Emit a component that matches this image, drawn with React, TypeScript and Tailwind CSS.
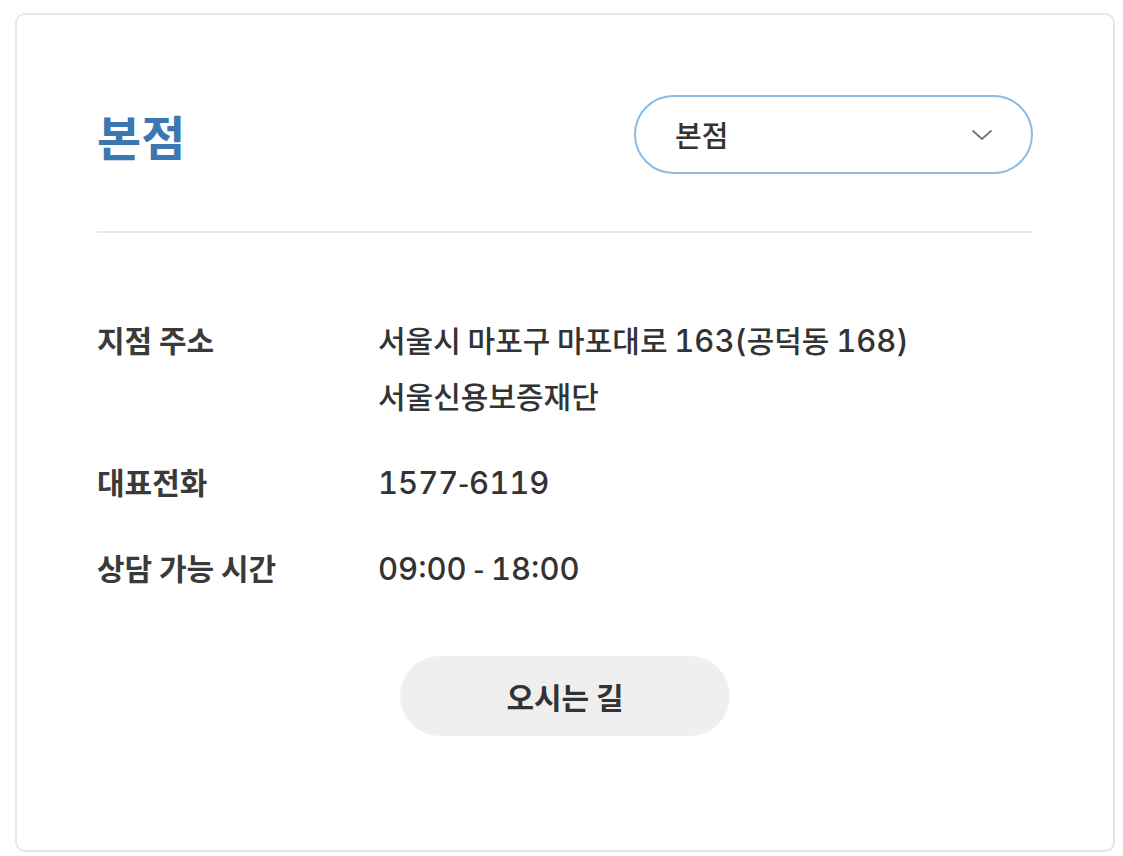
import React from 'react';

const rows = [
  { label: '지점 주소', lines: ['서울시 마포구 마포대로 163(공덕동 168)', '서울신용보증재단'] },
  { label: '대표전화', lines: ['1577-6119'] },
  { label: '상담 가능 시간', lines: ['09:00 - 18:00'] },
];

// hangul, spaces and dashes keep the CJK font; digits and punctuation get the wider latin face
function ValueLine({ text }: { text: string }) {
  const parts = text.split(/([\uAC00-\uD7A3 \-]+)/);
  return (
    <div>
      {parts.map((part, i) =>
        i % 2 === 1 ? (
          <span key={i}>{part}</span>
        ) : (
          <span
            key={i}
            className="text-[31px] leading-none tabular-nums"
            style={{ fontFamily: 'Inter, sans-serif' }}
          >
            {part}
          </span>
        )
      )}
    </div>
  );
}

export default function App() {
  return (
    <div
      className="min-h-screen bg-white pt-[13px] pl-[15px] pr-[8px] pb-[4px]"
      style={{ fontFamily: '"Noto Sans CJK KR", "Noto Sans", sans-serif' }}
    >
      <div className="w-[1100px] h-[839px] border-2 border-[#e6e6e6] rounded-[10px] px-[80px] pt-[80px]">
        <div className="flex items-center justify-between">
          <h1 className="text-[48px] font-bold text-[#3b78b2] leading-none">본점</h1>
          <button className="w-[399px] h-[79px] rounded-full border-2 border-[#8bbbe5] flex items-center justify-between pl-[39px] pr-[38px]">
            <span className="text-[29px] font-medium text-[#333]">본점</span>
            <svg width="22" height="12" viewBox="0 0 22 12" fill="none">
              <polyline points="1.5,1.5 11,10 20.5,1.5" stroke="#777" strokeWidth="2" />
            </svg>
          </button>
        </div>

        <div className="mt-[57px] border-t-2 border-[#e8e8e8]" />

        <div className="mt-[78px] flex flex-col gap-[30px]">
          {rows.map((row) => (
            <div key={row.label} className="flex text-[30px] leading-[56px] text-[#333]">
              <div className="w-[281px] font-bold text-[#3a3a3a]">{row.label}</div>
              <div className="font-medium">
                {row.lines.map((line) => (
                  <ValueLine key={line} text={line} />
                ))}
              </div>
            </div>
          ))}
        </div>

        <div className="mt-[61px] flex justify-center">
          <button className="w-[330px] h-[80px] rounded-full bg-[#efefef] text-[30px] font-bold text-[#333]">
            오시는 길
          </button>
        </div>
      </div>
    </div>
  );
}
